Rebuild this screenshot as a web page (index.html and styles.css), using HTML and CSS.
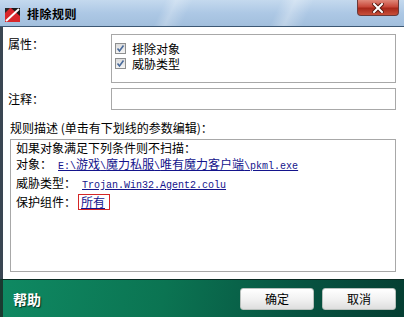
FILE: index.html
```html
<!DOCTYPE html>
<html lang="zh-CN">
<head>
    <meta charset="UTF-8">
    <title>排除规则</title>
    <link rel="stylesheet" href="styles.css">
</head>
<body>
    <div class="window">
        <div class="titlebar">
            <svg class="app-icon" width="15" height="14" viewBox="0 0 15 14">
                <rect x="0" y="0" width="15" height="14" fill="#d8262a"/>
                <polygon points="6,0 15,0 15,8" fill="#1a1a1a"/>
                <polygon points="0,0 5,0 0,5" fill="#2a2a2a"/>
                <line x1="1" y1="13" x2="14" y2="1" stroke="#ffffff" stroke-width="2"/>
            </svg>
            <span class="title">排除规则</span>
            <div class="close-btn">
                <svg width="12" height="10" viewBox="0 0 12 10">
                    <path d="M2 1 L10 9 M10 1 L2 9" stroke="#5a1a10" stroke-width="4" stroke-linecap="square"/>
                    <path d="M2 1 L10 9 M10 1 L2 9" stroke="#ffffff" stroke-width="2" stroke-linecap="square"/>
                </svg>
            </div>
        </div>

        <div class="content">
            <div class="field-row">
                <div class="label label-top">属性：</div>
                <div class="group-box">
                    <div class="check-item">
                        <span class="checkbox">
                            <svg width="9" height="9" viewBox="0 0 9 9"><path d="M1.5 4.5 L3.5 7 L7.5 1.5" fill="none" stroke="#4a6a9a" stroke-width="1.6"/></svg>
                        </span>
                        <span>排除对象</span>
                    </div>
                    <div class="check-item">
                        <span class="checkbox">
                            <svg width="9" height="9" viewBox="0 0 9 9"><path d="M1.5 4.5 L3.5 7 L7.5 1.5" fill="none" stroke="#4a6a9a" stroke-width="1.6"/></svg>
                        </span>
                        <span>威胁类型</span>
                    </div>
                </div>
            </div>

            <div class="field-row row-center comment-row">
                <div class="label">注释：</div>
                <div class="text-input"></div>
            </div>

            <div class="desc-label">规则描述 (单击有下划线的参数编辑)：</div>
            <div class="desc-box">
                <div class="desc-line">如果对象满足下列条件则不扫描：</div>
                <div class="desc-line">对象：<span class="gap"></span><a class="param"><span class="mono">E:\</span>游戏<span class="mono">\</span>魔力私服<span class="mono">\</span>唯有魔力客户端<span class="mono">\pkml.exe</span></a></div>
                <div class="desc-line">威胁类型：<span class="gap"></span><a class="param"><span class="mono">Trojan.Win32.Agent2.colu</span></a></div>
                <div class="desc-line">保护组件：<span class="param-box"><a class="param">所有</a></span></div>
            </div>
        </div>

        <div class="footer">
            <span class="help">帮助</span>
            <div class="buttons">
                <button class="btn">确定</button>
                <button class="btn">取消</button>
            </div>
        </div>
    </div>
</body>
</html>
```

FILE: styles.css
```css
body {
    margin: 0;
    padding: 0;
    width: 404px;
    height: 317px;
    overflow: hidden;
    font-family: "Noto Sans CJK SC", "Liberation Sans", sans-serif;
    font-size: 12px;
    color: #000;
    background-color: #ffffff;
    text-spacing-trim: space-all;
}

.window {
    display: flex;
    flex-direction: column;
    height: 317px;
}

/* 标题栏 */
.titlebar {
    height: 26px;
    display: flex;
    align-items: center;
    border-bottom: 1px solid #3d5874;
    background:
        linear-gradient(115deg, transparent 0, transparent 150px, rgba(255,255,255,0.25) 160px, transparent 175px, transparent 255px, rgba(255,255,255,0.3) 268px, transparent 285px),
        linear-gradient(180deg, #c4d9ee 0%, #adc8e5 50%, #a2bfdd 100%);
}

.app-icon {
    margin-left: 5px;
    margin-top: 4px;
}

.title {
    margin-left: 7px;
    font-weight: bold;
    letter-spacing: 0.5px;
    line-height: 14px;
    margin-top: 2px;
}

.close-btn {
    align-self: flex-start;
    margin-left: auto;
    margin-right: 5px;
    width: 40px;
    height: 15px;
    display: flex;
    align-items: center;
    justify-content: center;
    border: 1px solid #6a3a3a;
    border-top: none;
    border-radius: 0 0 4px 4px;
    background: linear-gradient(180deg, #e0887a 0%, #c8483a 45%, #a8281a 55%, #c8503a 100%);
}

/* 内容区 */
.content {
    flex: 1;
    display: flex;
    flex-direction: column;
    padding: 7px 8px 7px 5px;
    border-left: 3px solid #3a4652;
}

.field-row {
    display: flex;
}

.row-center {
    align-items: center;
}

.label {
    width: 103px;
    line-height: 14px;
}

.label-top {
    padding-top: 3px;
}

.group-box {
    flex: 1;
    height: 49px;
    box-sizing: border-box;
    border: 1px solid #a8a8a8;
    padding: 6px 0 0 3px;
}

.check-item {
    display: flex;
    align-items: center;
    height: 15px;
    line-height: 15px;
}

.checkbox {
    width: 9px;
    height: 9px;
    border: 1px solid #8e8f8f;
    background: linear-gradient(180deg, #dcdcdc, #f4f4f4);
    margin-right: 6px;
    display: flex;
}

.comment-row {
    margin-top: 5px;
}

.text-input {
    flex: 1;
    height: 22px;
    box-sizing: border-box;
    border: 1px solid #a8a8a8;
}

.desc-label {
    margin-top: 11px;
    margin-left: 2px;
    line-height: 14px;
}

.desc-box {
    flex: 1;
    margin-top: 4px;
    margin-left: 2px;
    border: 1px solid #a8a8a8;
    padding: 0 0 0 5px;
}

.desc-line {
    line-height: 16px;
    white-space: nowrap;
}

.gap {
    display: inline-block;
    width: 6px;
}

.param {
    color: #14148c;
    text-decoration: underline;
}

.mono {
    font-family: "Liberation Mono", monospace;
    font-size: 10px;
}

.param-box {
    display: inline-block;
    margin-left: 2px;
    padding: 0 4px 0 2px;
    border: 1px solid #d42626;
    line-height: 14px;
}

/* 底部 */
.footer {
    height: 37px;
    display: flex;
    align-items: center;
    justify-content: space-between;
    padding: 0 8px 0 10px;
    border-top: 1px solid #0a2a22;
    border-left: 3px solid #1a3a30;
    background: linear-gradient(100deg, #0f8962 0%, #0b7452 40%, #075240 75%, #053e32 100%);
}

.help {
    color: #ffffff;
    font-weight: bold;
    font-size: 14px;
    text-shadow: 1px 1px 1px #03301f;
}

.buttons {
    display: flex;
    gap: 8px;
}

.btn {
    width: 74px;
    height: 22px;
    padding: 0;
    font-family: "Noto Sans CJK SC", sans-serif;
    font-size: 12px;
    color: #000;
    border: 1px solid #b8c0bc;
    border-radius: 3px;
    background: linear-gradient(180deg, #ffffff 0%, #f2f2f2 50%, #dedede 100%);
}
```
